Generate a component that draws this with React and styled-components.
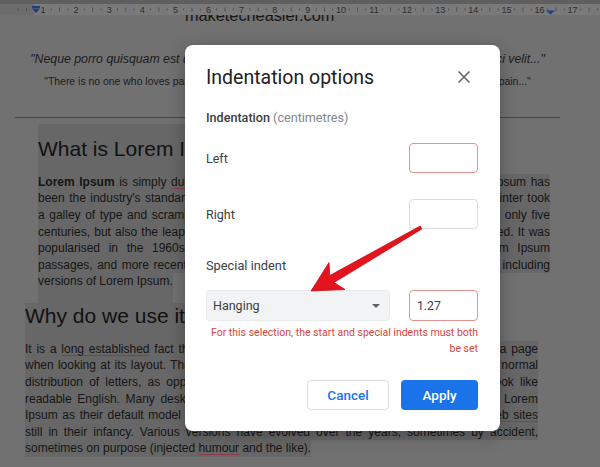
import React from 'react';
import styled, { createGlobalStyle } from 'styled-components';

const GlobalStyle = createGlobalStyle`
  html, body {
    margin: 0;
    padding: 0;
  }
  body {
    width: 600px;
    height: 467px;
    overflow: hidden;
    background: #717171;
    font-family: 'Liberation Sans', Arial, sans-serif;
  }
  * {
    box-sizing: border-box;
  }
`;

const CM = 33.1;

const sectionOne = () => [
  <>
    <Strong>Lorem Ipsum</Strong> is simply <Squiggle>dummy</Squiggle> text of the printing and typesetting industry. Lorem Ipsum has
  </>,
  "been the industry's standard dummy text ever since the 1500s, when an unknown printer took",
  'a galley of type and scrambled it to make a type specimen book. It has survived not only five',
  'centuries, but also the leap into electronic typesetting, remaining essentially unchanged. It was',
  'popularised in the 1960s with the release of Letraset sheets containing Lorem Ipsum',
  'passages, and more recently with desktop publishing software like Aldus PageMaker including',
  'versions of Lorem Ipsum.',
];

const sectionTwo = () => [
  <>
    It is a <Squiggle>long established</Squiggle> fact that a reader will be distracted by the readable content of a page
  </>,
  'when looking at its layout. The point of using Lorem Ipsum is that it has a more-or-less normal',
  "distribution of letters, as opposed to using 'Content here, content here', making it look like",
  'readable English. Many desktop publishing packages and web page editors now use Lorem',
  <>
    Ipsum as their default model text, and a search for 'lorem ipsum' will uncover many <Squiggle>web sites</Squiggle>
  </>,
  'still in their infancy. Various versions have evolved over the years, sometimes by accident,',
  <>
    sometimes on purpose (injected <Squiggle>humour</Squiggle> and the like).
  </>,
];

function Ruler() {
  const ticks = [];
  const numbers = [];
  for (let n = 0; n <= 17; n++) {
    const x = 43 - CM + n * CM;
    if (n > 0) {
      numbers.push(
        <text key={n} x={x} y={12.5} textAnchor="middle">
          {n}
        </text>
      );
    }
    [0.25, 0.5, 0.75].forEach((f) => {
      const tx = x + f * CM;
      const half = f === 0.5;
      ticks.push(
        <line key={n + '-' + f} x1={tx} x2={tx} y1={half ? 7.5 : 8.5} y2={half ? 11.5 : 10.5} />
      );
    });
  }
  return (
    <RulerBar>
      <svg width="600" height="15" viewBox="0 0 600 15">
        <rect x="0" y="4" width="34" height="11" fill="#6d6d6d" />
        <g stroke="#454545" strokeWidth="0.8">{ticks}</g>
        <g fill="#2c2c2c" fontSize="9" fontFamily="'Liberation Sans', Arial, sans-serif">
          {numbers}
        </g>
        <rect x="32" y="6" width="8" height="2" fill="#203f7c" />
        <path d="M32 8.5 L40 8.5 L36 13 Z" fill="#203f7c" />
        <path d="M546 10.5 L555 10.5 L550.5 14.5 Z" fill="#203f7c" />
      </svg>
    </RulerBar>
  );
}

function TextSection({ heading, lines, indent, width, gap, headingPad, headingHeight, tail }) {
  return (
    <Section $indent={indent} $gap={gap}>
      <HeadingLine $pad={headingPad} $height={headingHeight}>
        {heading}
      </HeadingLine>
      {lines.map((line, i) => {
        const last = i === lines.length - 1;
        return (
          <BodyLine key={i} $width={width} $last={last} $tail={last ? tail : 0}>
            {line}
          </BodyLine>
        );
      })}
    </Section>
  );
}

function CloseIcon() {
  return (
    <svg width="12" height="12" viewBox="0 0 12 12">
      <path d="M1 1 L11 11 M11 1 L1 11" stroke="#5f6368" strokeWidth="1.5" strokeLinecap="square" />
    </svg>
  );
}

function RedArrow() {
  return (
    <Annotation width="600" height="467" viewBox="0 0 600 467">
      <polygon
        points="311,291 345,289.5 334,282.5 421.8,229 420.3,226 329.8,275.5 329,262.5"
        fill="#e3141d"
        stroke="#c70f18"
        strokeWidth="0.8"
        strokeLinejoin="round"
      />
    </Annotation>
  );
}

export default function App() {
  return (
    <Screen>
      <GlobalStyle />
      <Ruler />
      <Doc>
        <SiteTitle>maketecheasier.com</SiteTitle>
        <Quote $gap={27.4} $size={12.3} $lh={16} $italic>
          "Neque porro quisquam est qui dolorem ipsum quia dolor sit amet, consectetur, adipisci velit..."
        </Quote>
        <Quote $gap={7.5} $size={10.45} $lh={14}>
          "There is no one who loves pain itself, who seeks after it and wants to have it, simply because it is pain..."
        </Quote>
        <Rule />
        <TextSection
          heading="What is Lorem Ipsum?"
          lines={sectionOne()}
          indent={38}
          width={512}
          gap={6}
          headingPad="10px 0 9.8px"
          headingHeight={30}
          tail={13}
        />
        <TextSection
          heading="Why do we use it?"
          lines={sectionTwo()}
          indent={25}
          width={513}
          gap={0}
          headingPad="0 0 11.8px"
          headingHeight={26}
          tail={0}
        />
      </Doc>

      <Dialog>
        <DialogHeader>
          <DialogTitle>Indentation options</DialogTitle>
          <CloseButton aria-label="Close">
            <CloseIcon />
          </CloseButton>
        </DialogHeader>
        <GroupLabel>
          Indentation <Muted>(centimetres)</Muted>
        </GroupLabel>
        <FieldRow $gap={16}>
          <FieldLabel>Left</FieldLabel>
          <NumberBox $error />
        </FieldRow>
        <FieldRow $gap={26}>
          <FieldLabel>Right</FieldLabel>
          <NumberBox />
        </FieldRow>
        <SubLabel>Special indent</SubLabel>
        <SpecialRow>
          <Select>
            <span>Hanging</span>
            <svg width="8" height="4" viewBox="0 0 8 4">
              <path d="M0 0 L8 0 L4 4 Z" fill="#5f6368" />
            </svg>
          </Select>
          <NumberBox $error>1.27</NumberBox>
        </SpecialRow>
        <ErrorNote>
          <span>For this selection, the start and special indents must both</span>
          <span>be set</span>
        </ErrorNote>
        <Actions>
          <Button $width={82}>Cancel</Button>
          <Button $width={77} $primary>
            Apply
          </Button>
        </Actions>
      </Dialog>

      <RedArrow />
    </Screen>
  );
}

const Screen = styled.div`
  position: relative;
  width: 600px;
  height: 467px;
  overflow: hidden;
  background: #717171;
`;

const RulerBar = styled.div`
  position: relative;
  z-index: 1;
  height: 15px;
  background: linear-gradient(#5f5f5f 0 4px, #7a7a7a 4px);

  svg {
    display: block;
  }
`;

const Doc = styled.main`
  display: flex;
  flex-direction: column;
  color: #151515;
`;

const SiteTitle = styled.div`
  margin: -9.4px 0 0 185px;
  font-size: 16.3px;
  line-height: 18px;
  color: #161616;
`;

const Quote = styled.p`
  margin: ${(p) => p.$gap}px 0 0;
  padding-right: 25px;
  text-align: center;
  font-size: ${(p) => p.$size}px;
  line-height: ${(p) => p.$lh}px;
  font-style: ${(p) => (p.$italic ? 'italic' : 'normal')};
  color: #1c1c1c;
  white-space: nowrap;
`;

const Rule = styled.hr`
  margin: 28.5px 0 0 15px;
  width: 545px;
  height: 1px;
  border: 0;
  background: #474747;
`;

const Section = styled.section`
  margin-top: ${(p) => p.$gap}px;
  padding-left: ${(p) => p.$indent}px;
  display: flex;
  flex-direction: column;
  align-items: flex-start;
`;

const HeadingLine = styled.h1`
  margin: 0;
  padding: ${(p) => p.$pad};
  font-size: 21px;
  font-weight: 400;
  line-height: ${(p) => p.$height}px;
  white-space: nowrap;
  background: #676767;
  color: #111;
`;

const BodyLine = styled.div`
  width: ${(p) => (p.$last ? 'auto' : `${p.$width}px`)};
  padding-bottom: ${(p) => p.$tail}px;
  font-size: 12px;
  line-height: 16.6px;
  text-align: justify;
  text-align-last: ${(p) => (p.$last ? 'auto' : 'justify')};
  white-space: ${(p) => (p.$last ? 'nowrap' : 'normal')};
  background: #676767;
`;

const Strong = styled.b`
  font-weight: 700;
`;

const Squiggle = styled.span`
  text-decoration: underline;
  text-decoration-color: #8d3b4a;
  text-underline-offset: 2px;
`;

const Dialog = styled.section`
  position: absolute;
  left: 185px;
  top: 45px;
  width: 315px;
  height: 386px;
  padding: 0 22px 0 21px;
  display: flex;
  flex-direction: column;
  background: #fff;
  border-radius: 8px;
  box-shadow: 0 4px 18px rgba(0, 0, 0, 0.28);
  font-family: Roboto, 'Noto Sans', sans-serif;
  color: #3c4043;
`;

const DialogHeader = styled.header`
  height: 64px;
  display: flex;
  align-items: center;
  justify-content: space-between;
`;

const DialogTitle = styled.h2`
  margin: 0;
  font-size: 19.5px;
  font-weight: 400;
  color: #202124;
`;

const CloseButton = styled.button`
  width: 28px;
  height: 28px;
  padding: 0;
  border: 0;
  background: none;
  display: flex;
  align-items: center;
  justify-content: center;
`;

const GroupLabel = styled.div`
  height: 18px;
  line-height: 18px;
  font-size: 12.6px;
  font-weight: 500;
  color: #3c4043;
`;

const Muted = styled.span`
  font-weight: 400;
  color: #80868b;
`;

const FieldRow = styled.div`
  margin-top: ${(p) => p.$gap}px;
  height: 30px;
  display: flex;
  align-items: center;
  justify-content: space-between;
`;

const FieldLabel = styled.span`
  font-size: 12.5px;
`;

const NumberBox = styled.div`
  width: 69px;
  height: 100%;
  padding: 0 7px;
  display: flex;
  align-items: center;
  border: 1px solid ${(p) => (p.$error ? '#e3948e' : '#dadce0')};
  border-radius: 4px;
  font-size: 12.2px;
  color: #3c4043;
`;

const SubLabel = styled.div`
  margin-top: 28px;
  height: 18px;
  line-height: 18px;
  font-size: 12.8px;
`;

const SpecialRow = styled.div`
  margin-top: 15px;
  height: 31px;
  display: flex;
  gap: 19px;
`;

const Select = styled.div`
  width: 184px;
  padding: 0 9px 0 6px;
  display: flex;
  align-items: center;
  justify-content: space-between;
  background: #f1f3f4;
  border: 1px solid #e8eaed;
  border-radius: 4px;
  font-size: 12.5px;
  color: #3c4043;
`;

const ErrorNote = styled.div`
  margin-top: 4px;
  display: flex;
  flex-direction: column;
  align-items: flex-end;
  font-size: 10.5px;
  line-height: 16px;
  color: #d9463c;
  white-space: nowrap;
`;

const Actions = styled.div`
  margin-top: 23px;
  display: flex;
  justify-content: flex-end;
  gap: 12px;
`;

const Button = styled.button`
  width: ${(p) => p.$width}px;
  height: 30px;
  border-radius: 4px;
  border: ${(p) => (p.$primary ? '0' : '1px solid #dadce0')};
  background: ${(p) => (p.$primary ? '#1a73e8' : '#fff')};
  color: ${(p) => (p.$primary ? '#fff' : '#1a73e8')};
  font-family: Roboto, 'Noto Sans', sans-serif;
  font-size: 13.5px;
  font-weight: 500;
`;

const Annotation = styled.svg`
  position: absolute;
  left: 0;
  top: 0;
  pointer-events: none;
`;
